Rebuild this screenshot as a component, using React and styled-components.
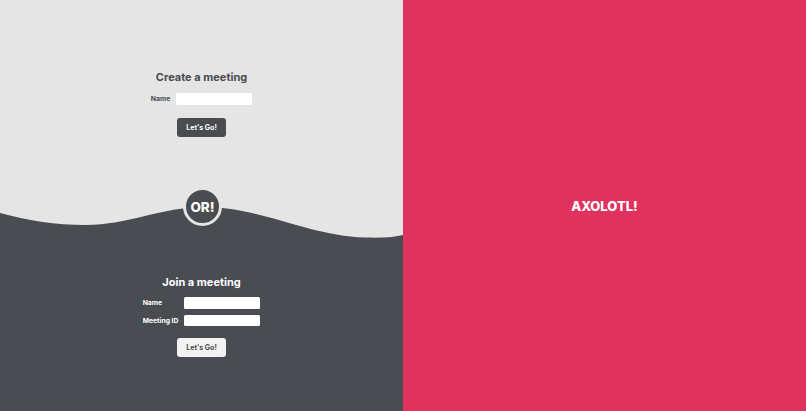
import React from "react";
import styled, { createGlobalStyle } from "styled-components";

const GlobalStyle = createGlobalStyle`
  html, body { margin: 0; padding: 0; height: 100%; }
  body { font-family: "Inter", "Liberation Sans", sans-serif; }
  #root { height: 100%; }
`;

const LIGHT = "#e5e5e5";
const DARK = "#494c51";
const RED = "#e0325e";

const Page = styled.div`
  display: grid;
  grid-template-columns: 1fr 1fr;
  height: 100vh;
`;

const Left = styled.div`
  display: flex;
  flex-direction: column;
  background: ${DARK};
`;

const Half = styled.section`
  display: flex;
  flex-direction: column;
  align-items: center;
  background: ${(p) => (p.light ? LIGHT : DARK)};
  color: ${(p) => (p.light ? DARK : "#fff")};
  height: ${(p) => (p.light ? "190px" : "auto")};
  flex: ${(p) => (p.light ? "none" : "1")};
  padding-top: ${(p) => (p.light ? "70px" : "35px")};
  box-sizing: border-box;
`;

const Title = styled.h2`
  margin: 0;
  font-size: 11px;
  line-height: 15px;
  font-weight: 700;
`;

const Form = styled.div`
  display: grid;
  grid-template-columns: auto 76px;
  column-gap: 6px;
  row-gap: 6px;
  align-items: center;
  margin-top: ${(p) => p.top}px;
`;

const Label = styled.label`
  font-size: 6.8px;
  font-weight: 700;
`;

const Input = styled.input`
  width: 76px;
  height: 11.5px;
  box-sizing: border-box;
  border: none;
  border-radius: 1.5px;
  background: #fff;
  padding: 0 3px;
  outline: none;
`;

const Button = styled.button`
  margin-top: ${(p) => p.top}px;
  width: 49px;
  height: 19px;
  border: none;
  border-radius: 3px;
  font-family: inherit;
  font-size: 7px;
  font-weight: 700;
  background: ${(p) => (p.light ? "#f2f2f2" : DARK)};
  color: ${(p) => (p.light ? DARK : "#fff")};
  cursor: pointer;
`;

const Divider = styled.div`
  position: relative;
  height: 50px;
  background: ${LIGHT};
  svg { display: block; }
`;

const OrBadge = styled.div`
  position: absolute;
  left: 183px;
  top: -3px;
  width: 39px;
  height: 39px;
  box-sizing: border-box;
  border-radius: 50%;
  border: 3px solid ${LIGHT};
  background: ${DARK};
  color: #fff;
  display: flex;
  align-items: center;
  justify-content: center;
  font-size: 13.5px;
  font-weight: 800;
`;

const Right = styled.div`
  background: ${RED};
  display: flex;
  align-items: center;
  justify-content: center;
`;

const Brand = styled.h1`
  margin: 0;
  color: #fff;
  font-size: 13px;
  font-weight: 800;
`;

function Wave() {
  return (
    <svg width="403" height="50" viewBox="0 0 403 50" preserveAspectRatio="none">
      <path
        d="M0 23 C30 31, 55 35, 85 35 C130 35, 160 17, 205 17 C260 17, 310 46, 365 47.5 C385 48, 395 47, 403 45 V50 H0 Z"
        fill={DARK}
      />
    </svg>
  );
}

export default function App() {
  return (
    <Page>
      <GlobalStyle />
      <Left>
        <Half light>
          <Title>Create a meeting</Title>
          <Form top={8}>
            <Label>Name</Label>
            <Input />
          </Form>
          <Button top={13}>Let's Go!</Button>
        </Half>
        <Divider>
          <Wave />
          <OrBadge>OR!</OrBadge>
        </Divider>
        <Half>
          <Title>Join a meeting</Title>
          <Form top={7}>
            <Label>Name</Label>
            <Input />
            <Label>Meeting ID</Label>
            <Input />
          </Form>
          <Button light top={12}>Let's Go!</Button>
        </Half>
      </Left>
      <Right>
        <Brand>AXOLOTL!</Brand>
      </Right>
    </Page>
  );
}
